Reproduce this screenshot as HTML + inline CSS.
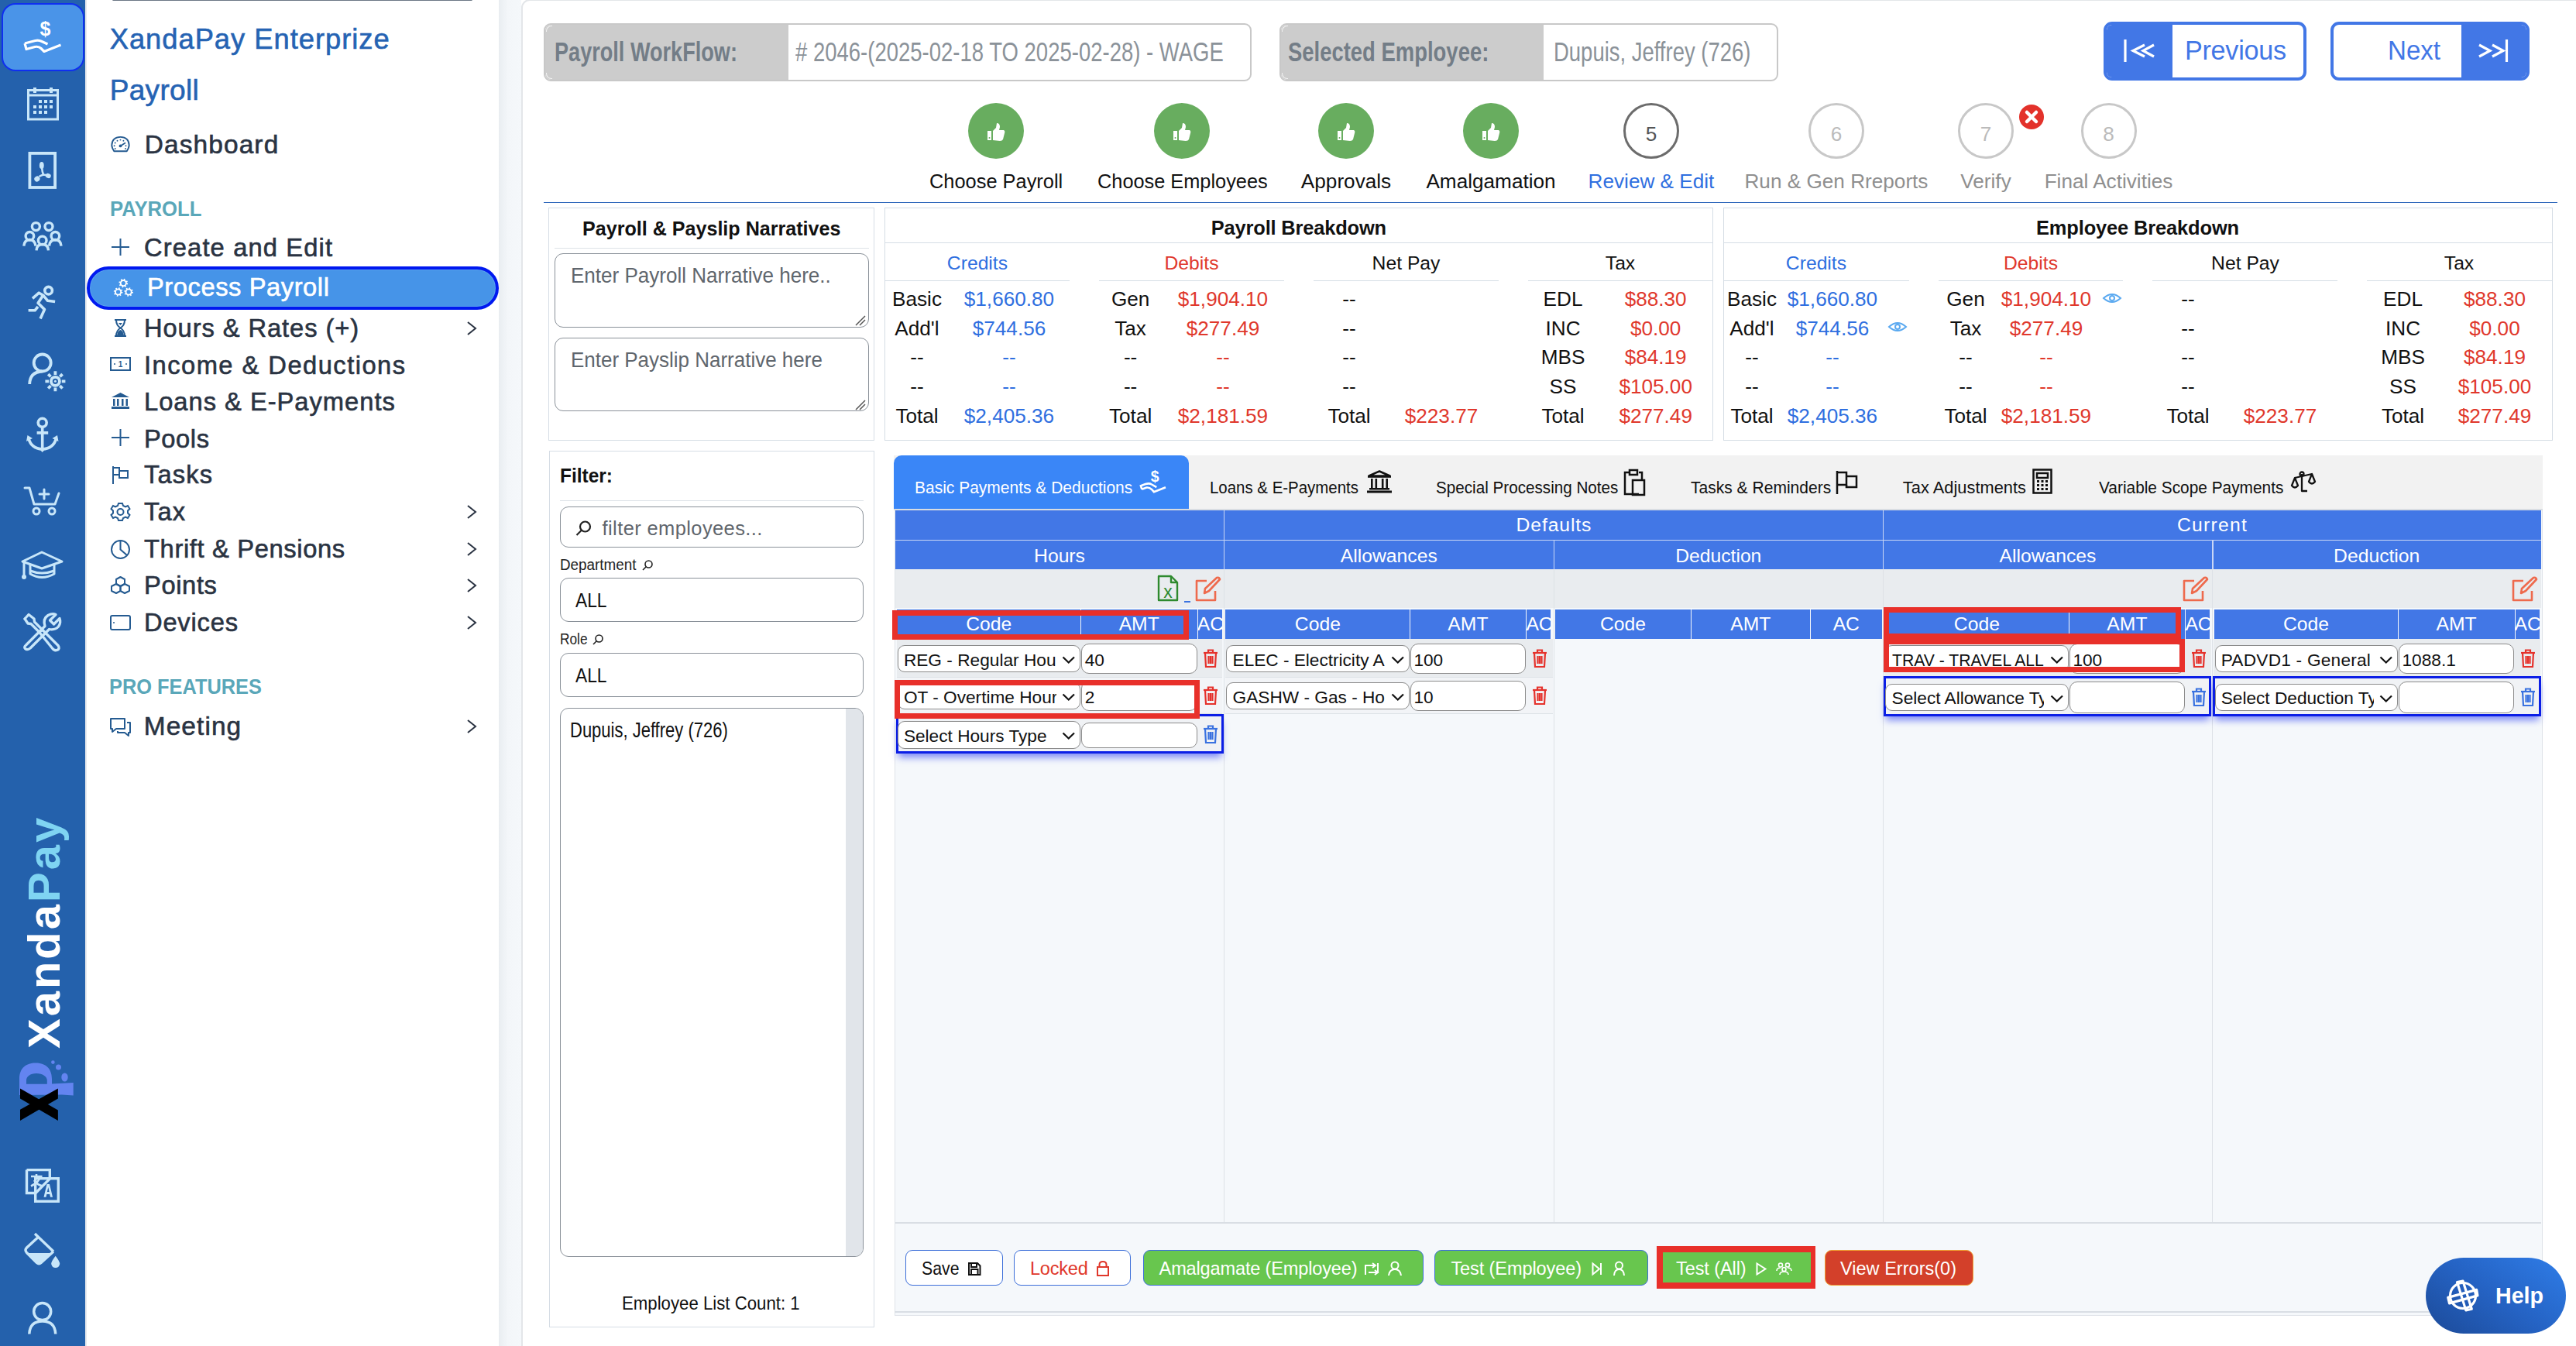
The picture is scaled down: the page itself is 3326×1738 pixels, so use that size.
<!DOCTYPE html>
<html><head><meta charset="utf-8"><title>XandaPay</title>
<style>
html,body{margin:0;padding:0;}
body{width:3326px;height:1738px;overflow:hidden;position:relative;background:#fff;font-family:"Liberation Sans",sans-serif;}
.r{position:absolute;box-sizing:border-box;}
.t{position:absolute;white-space:nowrap;line-height:normal;font-family:"Liberation Sans",sans-serif;}
svg.r{overflow:visible;}
.pm{-webkit-text-stroke:0.6px currentColor;}
</style></head><body>
<div class="r" style="left:0.00px;top:0.00px;width:110.00px;height:1738.00px;background:#2461ac;"></div>
<div class="r" style="left:110.00px;top:0.00px;width:2.00px;height:1738.00px;background:#e6e9ed;"></div>
<div class="r" style="left:1.50px;top:3.50px;width:107.00px;height:88.50px;background:#4a94e8;border:2px solid #0f2ff0;border-radius:18px;"></div>
<svg class="r" style="left:25.00px;top:20.00px;" width="60.00" height="55.00" viewBox="25 20 60 55" preserveAspectRatio="none">
<text x="58.4" y="45.5" font-family="Liberation Sans" font-weight="700" font-size="25" fill="#fff" text-anchor="middle">$</text>
<path d="M32 56 L45.5 52.5 Q50 51.5 54 53.5 L61.5 57" fill="none" stroke="#fff" stroke-width="3.2" stroke-linejoin="round"/>
<path d="M32 56 L34 63.5 L45 60.5 Q50 59.5 53 62.5 L57 66.5 L78.5 58" fill="none" stroke="#fff" stroke-width="3.2" stroke-linejoin="round"/>
</svg>
<svg class="r" style="left:34.50px;top:113.00px;" width="41.00" height="42.50" viewBox="0 0 41.0 42.5" preserveAspectRatio="none">
<rect x="1.5" y="3.5" width="38" height="37.5" fill="none" stroke="#c8e6f9" stroke-width="3"/>
<line x1="1.5" y1="10" x2="39.5" y2="10" stroke="#c8e6f9" stroke-width="3"/>
<rect x="8" y="0" width="4" height="7" fill="#c8e6f9"/><rect x="29" y="0" width="4" height="7" fill="#c8e6f9"/>
<g fill="#c8e6f9"><rect x="15" y="16" width="4" height="4"/><rect x="22" y="16" width="4" height="4"/><rect x="29" y="16" width="4" height="4"/>
<rect x="8" y="23" width="4" height="4"/><rect x="15" y="23" width="4" height="4"/><rect x="22" y="23" width="4" height="4"/><rect x="29" y="23" width="4" height="4"/>
<rect x="8" y="30" width="4" height="4"/><rect x="15" y="30" width="4" height="4"/><rect x="22" y="30" width="4" height="4"/></g>
</svg>
<svg class="r" style="left:34.00px;top:194.00px;" width="42.00" height="52.00" viewBox="34 194 42 52" preserveAspectRatio="none">
<rect x="38.4" y="197.9" width="32.7" height="44.1" fill="none" stroke="#c8e6f9" stroke-width="3.8"/>
<g fill="#c8e6f9"><ellipse cx="53.8" cy="213.5" rx="2.9" ry="4.6"/><ellipse cx="47.9" cy="231" rx="3.7" ry="3.3" transform="rotate(-35 47.9 231)"/><ellipse cx="62.3" cy="227" rx="3.5" ry="3" transform="rotate(20 62.3 227)"/></g>
<path d="M54 216 Q54.5 222 56 225.5 Q53 226.5 50.5 228 M56 225.5 Q59 226 61 226.5" fill="none" stroke="#c8e6f9" stroke-width="2.6"/>
</svg>
<svg class="r" style="left:28.00px;top:284.00px;" width="54.00" height="41.00" viewBox="0 0 54 41" preserveAspectRatio="none">
<g fill="none" stroke="#c8e6f9" stroke-width="3.4">
<circle cx="18.4" cy="8.6" r="5"/><circle cx="35" cy="8.6" r="5"/>
<circle cx="10.4" cy="20.8" r="5.3"/><circle cx="26.7" cy="26.4" r="5.3"/><circle cx="43.4" cy="20.8" r="5.3"/>
<path d="M2.8 33.6 Q3.5 25.5 10.4 25.5 Q17 25.5 18 33.6"/><path d="M19 39.3 Q19.5 31.5 26.7 31.5 Q34 31.5 34.5 39.3"/><path d="M35.5 33.6 Q36.3 25.5 43.4 25.5 Q50.3 25.5 51 33.6"/>
</g></svg>
<svg class="r" style="left:34.00px;top:368.00px;" width="42.00" height="46.00" viewBox="0 0 42 46" preserveAspectRatio="none">
<g fill="none" stroke="#c8e6f9" stroke-width="3.6" stroke-linecap="butt" stroke-linejoin="round">
<circle cx="28.6" cy="7.2" r="4.8"/>
<path d="M8 17.3 L16.3 10.2 L21.7 13.2 L27.6 20.3 L37.1 21.5"/>
<path d="M21.7 13.2 L15.1 23.3 L23.5 31.6 L18.1 43.5"/>
<path d="M15 28 L11 32.8 L2.6 32.8"/>
</g></svg>
<svg class="r" style="left:30.00px;top:450.00px;" width="60.00" height="60.00" viewBox="30 450 60 60" preserveAspectRatio="none">
<g fill="none" stroke="#c8e6f9" stroke-width="3.8">
<circle cx="54.7" cy="468.5" r="11"/><path d="M38.2 496 Q38.5 480.5 54.5 479.5"/>
<circle cx="71.4" cy="492.3" r="5.5"/>
</g>
<g stroke="#c8e6f9" stroke-width="3.8"><path d="M71.4 479.3 L71.4 484 M71.4 500.5 L71.4 505.3 M58.4 492.3 L63 492.3 M79.8 492.3 L84.4 492.3 M62.2 483.1 L65.5 486.4 M77.3 498.2 L80.6 501.5 M62.2 501.5 L65.5 498.2 M77.3 486.4 L80.6 483.1"/></g>
<circle cx="71.4" cy="492.3" r="1.5" fill="#c8e6f9"/>
</svg>
<svg class="r" style="left:30.00px;top:535.00px;" width="50.00" height="50.00" viewBox="30 535 50 50" preserveAspectRatio="none">
<g fill="none" stroke="#c8e6f9" stroke-width="3.6">
<circle cx="54.7" cy="545.8" r="5.5"/><path d="M54.7 551.3 L54.7 580 M47.6 558.9 L62.2 558.9"/>
<path d="M37 566 Q40 579 54.7 580 Q69.4 579 72.5 566"/>
</g>
<path d="M34 570 L35.5 562 L42 566 Z M75.5 570 L74 562 L67.5 566 Z" fill="#c8e6f9"/>
<path d="M51 580 L54.7 584 L58.4 580 Z" fill="#c8e6f9"/>
</svg>
<svg class="r" style="left:31.00px;top:628.00px;" width="46.00" height="38.00" viewBox="0 0 46 38" preserveAspectRatio="none">
<g fill="none" stroke="#c8e6f9" stroke-width="3" stroke-linecap="round" stroke-linejoin="round">
<path d="M1 2 L7 2 L13 23 L40 23 L45 9"/><path d="M26 4 L26 16 M20 10 L32 10"/>
<circle cx="16" cy="32" r="4"/><circle cx="36" cy="32" r="4"/>
</g></svg>
<svg class="r" style="left:26.00px;top:710.00px;" width="57.00" height="40.00" viewBox="0 0 57 40" preserveAspectRatio="none">
<g fill="none" stroke="#c8e6f9" stroke-width="3" stroke-linejoin="round">
<path d="M3 15 L28 3 L54 15 L28 24 Z"/>
<path d="M13 19 L13 31 Q28 40 44 31 L44 19"/><path d="M13 27 Q28 33 44 27"/>
<path d="M5 16 L5 34"/>
</g><circle cx="5" cy="35" r="3" fill="#c8e6f9"/></svg>
<svg class="r" style="left:25.00px;top:788.00px;" width="60.00" height="57.00" viewBox="25 788 60 57" preserveAspectRatio="none">
<g fill="none" stroke="#c8e6f9" stroke-width="3.3" stroke-linejoin="round" stroke-linecap="round">
<path d="M32 799 L37 793.5 L44 799 L44.5 803 L55 813.5"/>
<path d="M32 799 L36 805 L40 805.5 L50.5 816"/>
<path d="M55 813.5 L75 833.5 Q78 838 73.5 839.5 Q70 840.5 67.5 837 L50.5 816 Z"/>
<path d="M33.5 833 L58 808.5 Q55 799 62 794.5 Q67.5 791.5 72 793.5 L64.5 801 L69.5 806 L77 798.5 Q79 804 75.5 809 Q71 814 63.5 812.5 L39 837 Q35 840 32.5 837.5 Q30.5 835.5 33.5 833 Z"/>
</g></svg>
<div class="t" style="left:22.5px;top:1354px;transform-origin:0 0;transform:rotate(-90deg);font-size:58px;font-weight:700;color:#fff;letter-spacing:3px;">Xanda<span style="color:#7fd4f2;">Pay</span></div>
<svg class="r" style="left:20.00px;top:1365.00px;" width="80.00" height="85.00" viewBox="0 0 80 85" preserveAspectRatio="none">
<path fill-rule="evenodd" d="M5 49 L5 28 C5 14 14 7.5 26 7.5 C38 7.5 47 14 47 28 L47 34.5 L74.7 33 L74.7 49.4 L60 48.5 L5 49 Z M14 34.7 L14 30 C14 25 19 21 27 21 C35 21 40.8 25 40.8 30 L40.8 34.7 Z" fill="#6384f0"/>
<circle cx="48.4" cy="6.6" r="2.3" fill="#6384f0"/><circle cx="55.5" cy="13" r="3.5" fill="#6384f0"/><ellipse cx="63.5" cy="26" rx="4.2" ry="5.5" fill="#6384f0"/>
<polygon points="6,40.5 54.9,68.6 54.9,82 6,53.4" fill="#000"/><polygon points="6,67.7 54.9,40.5 54.9,53.4 6,82" fill="#000"/>
</svg>
<svg class="r" style="left:28.00px;top:1504.00px;" width="54.00" height="54.00" viewBox="28 1504 54 54" preserveAspectRatio="none">
<g fill="none" stroke="#c8e6f9" stroke-width="3.4">
<path d="M34.5 1510.6 L64.3 1510.6 L64.3 1522 M34.5 1510.6 L34.5 1540.5 L46 1540.5"/>
<rect x="45.7" y="1521.7" width="29.6" height="29.5"/>
</g>
<path d="M46 1540.5 L64.3 1522" stroke="#c8e6f9" stroke-width="3.4"/>
<path d="M40 1519 L54.5 1519 M47 1516 L47 1519 M52 1519 Q50 1527 40 1531.5 M44 1524 Q48 1530 54 1531" fill="none" stroke="#c8e6f9" stroke-width="2.6"/>
<path d="M56.5 1545.8 L60.5 1529 L64 1529 L68 1545.8 L65 1545.8 L64.2 1542 L60.3 1542 L59.5 1545.8 Z M60.9 1539 L63.6 1539 L62.3 1533 Z" fill="#c8e6f9" fill-rule="evenodd"/>
</svg>
<svg class="r" style="left:28.00px;top:1588.00px;" width="54.00" height="54.00" viewBox="28 1588 54 54" preserveAspectRatio="none">
<path d="M45 1593 L69 1616" stroke="#c8e6f9" stroke-width="3.4" fill="none"/>
<path d="M49.5 1597.3 L34.5 1611 Q31.5 1614.3 34.5 1617.5 L47.5 1630.5 Q50.3 1633 53 1630.5 L69 1616" fill="none" stroke="#c8e6f9" stroke-width="3.4" stroke-linejoin="round"/>
<path d="M35.5 1618 L66.5 1618 L52 1631 Q50.3 1632.5 48.5 1631 Z" fill="#c8e6f9"/>
<path d="M71.7 1621.8 Q65.5 1629.5 66.3 1632.5 Q67.5 1637 71.7 1637 Q76 1637 77.1 1632.5 Q77.8 1629.5 71.7 1621.8 Z" fill="#c8e6f9"/>
</svg>
<svg class="r" style="left:32.00px;top:1678.00px;" width="46.00" height="48.00" viewBox="32 1678 46 48" preserveAspectRatio="none">
<g fill="none" stroke="#c8e6f9" stroke-width="3.5"><circle cx="54.7" cy="1693.6" r="11"/><path d="M37.8 1722.5 Q38.5 1706 54.7 1706 Q71 1706 71.7 1722.5"/></g></svg>
<div class="r" style="left:145.00px;top:-2.00px;width:465.00px;height:3.00px;background:#6b7785;border-radius:2px;"></div>
<div class="t pm" style="left:141.70px;top:29.60px;font-size:36.34px;color:#2563b3;letter-spacing:0.979px;">XandaPay Enterprize</div>
<div class="t pm" style="left:141.70px;top:95.45px;font-size:37.06px;color:#2563b3;letter-spacing:0.295px;">Payroll</div>
<div class="t pm" style="left:186.70px;top:167.74px;font-size:33.43px;color:#2a3342;letter-spacing:1.128px;">Dashboard</div>
<svg class="r" style="left:140.00px;top:172.00px;" width="32.00" height="28.00" viewBox="140 172 32 28" preserveAspectRatio="none"><path d="M147.3 195.2 Q144.3 190.5 144.3 187.5 Q144.8 177 155.5 176.9 Q166.2 177 166.7 187.5 Q166.7 190.5 163.7 195.2 Z" fill="none" stroke="#255b91" stroke-width="1.9" stroke-linejoin="round"/><circle cx="155.5" cy="180.6" r="0.95" fill="#255b91"/><circle cx="151.5" cy="181.7" r="0.95" fill="#255b91"/><circle cx="159.4" cy="181.7" r="0.95" fill="#255b91"/><circle cx="148.7" cy="184.5" r="0.95" fill="#255b91"/><circle cx="147.6" cy="188.3" r="0.95" fill="#255b91"/><circle cx="148.7" cy="192" r="0.95" fill="#255b91"/><circle cx="162.5" cy="188.3" r="0.95" fill="#255b91"/><circle cx="162" cy="192" r="0.95" fill="#255b91"/><path d="M155.5 188.4 L161.4 184.8" stroke="#255b91" stroke-width="1.8" stroke-linecap="round"/><circle cx="155.5" cy="188.4" r="1.9" fill="#255b91"/></svg>
<div class="t " style="left:141.60px;top:254.00px;font-size:27.62px;color:#5aa7b9;font-weight:700;transform-origin:0 0;transform:scaleX(0.9300);">PAYROLL</div>
<div class="t pm" style="left:186.00px;top:301.09px;font-size:32.70px;color:#2a3342;letter-spacing:1.136px;">Create and Edit</div>
<svg class="r" style="left:144.00px;top:307.70px;" width="23.00" height="22.00" viewBox="0 0 23 22.0" preserveAspectRatio="none"><path d="M11.5 0 L11.5 22 M0 11 L23 11" stroke="#255b91" stroke-width="2"/></svg>
<div class="t pm" style="left:186.00px;top:405.09px;font-size:32.70px;color:#2a3342;letter-spacing:0.918px;">Hours &amp; Rates (+)</div>
<svg class="r" style="left:601.00px;top:413.70px;" width="16.00" height="20.00" viewBox="0 0 16 20.0" preserveAspectRatio="none"><path d="M3 2 L13 10 L3 18" fill="none" stroke="#2a3342" stroke-width="2"/></svg>
<svg class="r" style="left:147.00px;top:411.70px;" width="17.00" height="23.00" viewBox="0 0 17 23.0" preserveAspectRatio="none"><path d="M1 1 L16 1 M1 22 L16 22 M3 1 Q3 8 8.5 11.5 Q14 15 14 22 M14 1 Q14 8 8.5 11.5 Q3 15 3 22" fill="none" stroke="#255b91" stroke-width="2"/><path d="M4 21 Q5 15 8.5 14 Q12 15 13 21 Z M6 5 L11 5 L8.5 8Z" fill="#255b91"/></svg>
<div class="t pm" style="left:186.00px;top:452.59px;font-size:32.70px;color:#2a3342;letter-spacing:1.464px;">Income &amp; Deductions</div>
<svg class="r" style="left:142.00px;top:461.20px;" width="27.00" height="18.00" viewBox="0 0 27 18.0" preserveAspectRatio="none"><rect x="1" y="1" width="25" height="16" fill="none" stroke="#255b91" stroke-width="2"/><text x="13.5" y="13" font-size="10" font-family="Liberation Sans" font-weight="700" fill="#255b91" text-anchor="middle">1</text><circle cx="6" cy="9" r="1" fill="#255b91"/><circle cx="21" cy="9" r="1" fill="#255b91"/></svg>
<div class="t pm" style="left:186.00px;top:499.79px;font-size:32.70px;color:#2a3342;letter-spacing:0.985px;">Loans &amp; E-Payments</div>
<svg class="r" style="left:143.00px;top:506.40px;" width="25.00" height="22.00" viewBox="0 0 25 22.0" preserveAspectRatio="none"><path d="M12.5 1 L24 7 L1 7 Z" fill="#255b91"/><g fill="#255b91"><rect x="3" y="9" width="2.5" height="9"/><rect x="8" y="9" width="2.5" height="9"/><rect x="14" y="9" width="2.5" height="9"/><rect x="19.5" y="9" width="2.5" height="9"/><rect x="1" y="19" width="23" height="3"/></g></svg>
<div class="t pm" style="left:186.00px;top:547.69px;font-size:32.70px;color:#2a3342;letter-spacing:0.560px;">Pools</div>
<svg class="r" style="left:144.00px;top:554.30px;" width="23.00" height="22.00" viewBox="0 0 23 22.0" preserveAspectRatio="none"><path d="M11.5 0 L11.5 22 M0 11 L23 11" stroke="#255b91" stroke-width="2"/></svg>
<div class="t pm" style="left:186.00px;top:594.39px;font-size:32.70px;color:#2a3342;letter-spacing:1.111px;">Tasks</div>
<svg class="r" style="left:144.00px;top:601.00px;" width="23.00" height="24.00" viewBox="0 0 23 24" preserveAspectRatio="none"><path d="M2 1 L2 24 M2 3 L10 3 L10 7 L21 7 L21 16 L10 16 L10 12 L2 12 M10 3 L10 12" fill="none" stroke="#255b91" stroke-width="2"/></svg>
<div class="t pm" style="left:186.00px;top:642.39px;font-size:32.70px;color:#2a3342;letter-spacing:1.073px;">Tax</div>
<svg class="r" style="left:601.00px;top:651.00px;" width="16.00" height="20.00" viewBox="0 0 16 20" preserveAspectRatio="none"><path d="M3 2 L13 10 L3 18" fill="none" stroke="#2a3342" stroke-width="2"/></svg>
<svg class="r" style="left:143.00px;top:649.00px;" width="25.00" height="24.00" viewBox="0 0 25 24" preserveAspectRatio="none"><g fill="none" stroke="#255b91" stroke-width="2"><circle cx="12.5" cy="12" r="4"/><path d="M10 1 L15 1 L16 4 L19 5.5 L22 4 L24.5 8 L22 10.5 L22 13.5 L24.5 16 L22 20 L19 18.5 L16 20 L15 23 L10 23 L9 20 L6 18.5 L3 20 L0.5 16 L3 13.5 L3 10.5 L0.5 8 L3 4 L6 5.5 L9 4 Z"/></g></svg>
<div class="t pm" style="left:186.00px;top:689.99px;font-size:32.70px;color:#2a3342;letter-spacing:0.641px;">Thrift &amp; Pensions</div>
<svg class="r" style="left:601.00px;top:698.60px;" width="16.00" height="20.00" viewBox="0 0 16 20.0" preserveAspectRatio="none"><path d="M3 2 L13 10 L3 18" fill="none" stroke="#2a3342" stroke-width="2"/></svg>
<svg class="r" style="left:143.00px;top:696.60px;" width="25.00" height="25.00" viewBox="0 0 25 25.0" preserveAspectRatio="none"><g fill="none" stroke="#255b91" stroke-width="2"><circle cx="12.5" cy="12.5" r="11.5"/><path d="M12.5 1 L12.5 12.5 L21 20"/></g></svg>
<div class="t pm" style="left:186.00px;top:737.39px;font-size:32.70px;color:#2a3342;letter-spacing:0.617px;">Points</div>
<svg class="r" style="left:601.00px;top:746.00px;" width="16.00" height="20.00" viewBox="0 0 16 20" preserveAspectRatio="none"><path d="M3 2 L13 10 L3 18" fill="none" stroke="#2a3342" stroke-width="2"/></svg>
<svg class="r" style="left:143.00px;top:744.00px;" width="25.00" height="24.00" viewBox="0 0 25 24" preserveAspectRatio="none"><g fill="none" stroke="#255b91" stroke-width="2" stroke-linejoin="round"><path d="M12.5 1 L18 4 L18 10 L12.5 13 L7 10 L7 4 Z"/><path d="M7 10 L12.5 13 L12.5 19 L7 22 L1 19 L1 13 Z"/><path d="M18 10 L24 13 L24 19 L18 22 L12.5 19 L12.5 13Z"/></g></svg>
<div class="t pm" style="left:186.00px;top:785.39px;font-size:32.70px;color:#2a3342;letter-spacing:0.790px;">Devices</div>
<svg class="r" style="left:601.00px;top:794.00px;" width="16.00" height="20.00" viewBox="0 0 16 20" preserveAspectRatio="none"><path d="M3 2 L13 10 L3 18" fill="none" stroke="#2a3342" stroke-width="2"/></svg>
<svg class="r" style="left:142.00px;top:794.00px;" width="27.00" height="20.00" viewBox="0 0 27 20" preserveAspectRatio="none"><rect x="1" y="1" width="25" height="18" rx="2" fill="none" stroke="#255b91" stroke-width="2"/><circle cx="5" cy="10" r="1" fill="#255b91"/></svg>
<div class="r" style="left:112.00px;top:344.00px;width:532.00px;height:56.00px;background:#4694e8;border:4px solid #0019f0;border-radius:28px;box-shadow:inset 0 0 0 1px #5aa2ee;"></div>
<div class="t pm" style="left:190.00px;top:352.39px;font-size:32.70px;color:#fff;letter-spacing:0.562px;">Process Payroll</div>
<svg class="r" style="left:140.00px;top:355.00px;" width="35.00" height="35.00" viewBox="140 355 35 35" preserveAspectRatio="none"><circle cx="159.3" cy="365.6" r="3.6" fill="none" stroke="#fff" stroke-width="1.9"/><circle cx="159.3" cy="365.6" r="4.9" fill="none" stroke="#fff" stroke-width="1.9" stroke-dasharray="1.55 2.3"/><circle cx="152.6" cy="377" r="3.6" fill="none" stroke="#fff" stroke-width="1.9"/><circle cx="152.6" cy="377" r="4.9" fill="none" stroke="#fff" stroke-width="1.9" stroke-dasharray="1.55 2.3"/><circle cx="166.1" cy="377" r="3.6" fill="none" stroke="#fff" stroke-width="1.9"/><circle cx="166.1" cy="377" r="4.9" fill="none" stroke="#fff" stroke-width="1.9" stroke-dasharray="1.55 2.3"/></svg>
<div class="t " style="left:141.00px;top:870.60px;font-size:28.05px;color:#5aa7b9;font-weight:700;transform-origin:0 0;transform:scaleX(0.9050);">PRO FEATURES</div>
<div class="t pm" style="left:185.70px;top:918.54px;font-size:33.43px;color:#2a3342;letter-spacing:1.098px;">Meeting</div>
<svg class="r" style="left:601.00px;top:927.80px;" width="16.00" height="20.00" viewBox="0 0 16 20.0" preserveAspectRatio="none"><path d="M3 2 L13 10 L3 18" fill="none" stroke="#2a3342" stroke-width="2"/></svg>
<svg class="r" style="left:142.00px;top:926.00px;" width="28.00" height="26.00" viewBox="0 0 28 26" preserveAspectRatio="none"><g fill="none" stroke="#255b91" stroke-width="2" stroke-linejoin="round"><path d="M1 2 L19 2 L19 15 L8 15 L3 19 L3 15 L1 15 Z"/><path d="M22 7 L26 7 L26 20 L24 20 L24 24 L19 20 L10 20 L10 18"/></g></svg>
<div class="r" style="left:644.00px;top:0.00px;width:29.00px;height:1738.00px;background:linear-gradient(90deg,#e9edf1 0%,#f3f6f9 40%,#f5f8fb 100%);"></div>
<div class="r" style="left:672.50px;top:-0.70px;width:2667.50px;height:1760.70px;background:#fff;border:2px solid #e3e6e9;border-radius:11px;"></div>
<div class="r" style="left:702.00px;top:30.00px;width:914.00px;height:75.00px;background:#fff;border:2px solid #c8c8c8;border-radius:9px;overflow:hidden;"><div style="position:absolute;left:0;top:0;bottom:0;width:314px;background:#cccccc;"></div></div>
<div class="r" style="left:705px;top:33px;width:8px;height:8px;border-top:1.5px solid #f2f2f2;border-left:1.5px solid #f2f2f2;border-radius:7px 0 0 0;"></div>
<div class="r" style="left:705px;top:94px;width:8px;height:8px;border-bottom:1.5px solid #f2f2f2;border-left:1.5px solid #f2f2f2;border-radius:0 0 0 7px;"></div>
<div class="t " style="left:715.60px;top:47.42px;font-size:34.88px;color:#737d87;font-weight:700;transform-origin:0 0;transform:scaleX(0.7772);">Payroll WorkFlow:</div>
<div class="t " style="left:1027.00px;top:47.42px;font-size:34.88px;color:#8b9299;transform-origin:0 0;transform:scaleX(0.7885);"># 2046-(2025-02-18 TO 2025-02-28) - WAGE</div>
<div class="r" style="left:1651.50px;top:30.00px;width:644.50px;height:75.00px;background:#fff;border:2px solid #c8c8c8;border-radius:9px;overflow:hidden;"><div style="position:absolute;left:0;top:0;bottom:0;width:339.5px;background:#cccccc;"></div></div>
<div class="r" style="left:1654.5px;top:33px;width:8px;height:8px;border-top:1.5px solid #f2f2f2;border-left:1.5px solid #f2f2f2;border-radius:7px 0 0 0;"></div>
<div class="r" style="left:1654.5px;top:94px;width:8px;height:8px;border-bottom:1.5px solid #f2f2f2;border-left:1.5px solid #f2f2f2;border-radius:0 0 0 7px;"></div>
<div class="t " style="left:1662.60px;top:47.42px;font-size:34.88px;color:#737d87;font-weight:700;transform-origin:0 0;transform:scaleX(0.7869);">Selected Employee:</div>
<div class="t " style="left:2006.00px;top:47.42px;font-size:34.88px;color:#8b9299;transform-origin:0 0;transform:scaleX(0.7874);">Dupuis, Jeffrey (726)</div>
<div class="r" style="left:2716.00px;top:28.00px;width:262.00px;height:76.00px;background:#fff;border:4px solid #4277e6;border-radius:11px;overflow:hidden;"><div style="position:absolute;left:0;top:0;bottom:0;width:85px;background:#4277e6;"></div></div>
<div class="t " style="left:2821.00px;top:46.08px;font-size:34.16px;color:#4277e6;letter-spacing:-0.267px;">Previous</div>
<svg class="r" style="left:2740.00px;top:48.00px;" width="44.00" height="34.00" viewBox="0 0 44 34" preserveAspectRatio="none"><g fill="none" stroke="#fff" stroke-width="3.2"><path d="M4 3 L4 32"/><path d="M29 10 L14 17.5 L29 25"/><path d="M41 10 L27 17.5 L41 25"/></g></svg>
<div class="r" style="left:3009.00px;top:28.00px;width:257.00px;height:76.00px;background:#fff;border:4px solid #4277e6;border-radius:11px;overflow:hidden;"><div style="position:absolute;right:0;top:0;bottom:0;width:84px;background:#4277e6;"></div></div>
<div class="t " style="left:3083.00px;top:46.08px;font-size:34.16px;color:#4277e6;transform-origin:0 0;transform:scaleX(0.9688);">Next</div>
<svg class="r" style="left:3198.00px;top:48.00px;" width="44.00" height="34.00" viewBox="0 0 44 34" preserveAspectRatio="none"><g fill="none" stroke="#fff" stroke-width="3.2"><path d="M38.5 3 L38.5 32"/><path d="M3 10 L17 17.5 L3 25"/><path d="M20 10 L34 17.5 L20 25"/></g></svg>
<div class="r" style="left:1250px;top:133px;width:72px;height:72px;border-radius:50%;background:#68ad5f;"></div>
<svg class="r" style="left:1274.00px;top:158.00px;" width="24.00" height="24.00" viewBox="-12 -12 24 24" preserveAspectRatio="none"><path d="M-11 -1 L-6 -1 L-6 11 L-11 11 Z M-4 -1 L0 -5 L1 -11 Q5 -11 5 -6 L4 -2 L10 -2 Q12 -1 11 2 L9 10 Q8 12 5 12 L-4 11 Z" fill="#fff"/><circle cx="-8.5" cy="8" r="1" fill="#68ad5f"/></svg>
<div class="t " style="left:1199.60px;top:218.91px;font-size:26.16px;color:#111;transform-origin:0 0;transform:scaleX(0.9708);">Choose Payroll</div>
<div class="r" style="left:1490px;top:133px;width:72px;height:72px;border-radius:50%;background:#68ad5f;"></div>
<svg class="r" style="left:1514.00px;top:158.00px;" width="24.00" height="24.00" viewBox="-12 -12 24 24" preserveAspectRatio="none"><path d="M-11 -1 L-6 -1 L-6 11 L-11 11 Z M-4 -1 L0 -5 L1 -11 Q5 -11 5 -6 L4 -2 L10 -2 Q12 -1 11 2 L9 10 Q8 12 5 12 L-4 11 Z" fill="#fff"/><circle cx="-8.5" cy="8" r="1" fill="#68ad5f"/></svg>
<div class="t " style="left:1416.70px;top:218.91px;font-size:26.16px;color:#111;transform-origin:0 0;transform:scaleX(0.9686);">Choose Employees</div>
<div class="r" style="left:1702px;top:133px;width:72px;height:72px;border-radius:50%;background:#68ad5f;"></div>
<svg class="r" style="left:1726.00px;top:158.00px;" width="24.00" height="24.00" viewBox="-12 -12 24 24" preserveAspectRatio="none"><path d="M-11 -1 L-6 -1 L-6 11 L-11 11 Z M-4 -1 L0 -5 L1 -11 Q5 -11 5 -6 L4 -2 L10 -2 Q12 -1 11 2 L9 10 Q8 12 5 12 L-4 11 Z" fill="#fff"/><circle cx="-8.5" cy="8" r="1" fill="#68ad5f"/></svg>
<div class="t " style="left:1679.85px;top:218.91px;font-size:26.16px;color:#111;">Approvals</div>
<div class="r" style="left:1889px;top:133px;width:72px;height:72px;border-radius:50%;background:#68ad5f;"></div>
<svg class="r" style="left:1913.00px;top:158.00px;" width="24.00" height="24.00" viewBox="-12 -12 24 24" preserveAspectRatio="none"><path d="M-11 -1 L-6 -1 L-6 11 L-11 11 Z M-4 -1 L0 -5 L1 -11 Q5 -11 5 -6 L4 -2 L10 -2 Q12 -1 11 2 L9 10 Q8 12 5 12 L-4 11 Z" fill="#fff"/><circle cx="-8.5" cy="8" r="1" fill="#68ad5f"/></svg>
<div class="t " style="left:1841.41px;top:218.91px;font-size:26.16px;color:#111;">Amalgamation</div>
<div class="r" style="left:2096px;top:133px;width:72px;height:72px;border-radius:50%;border:3px solid #6c6c6c;"></div>
<div class="t " style="left:2124.74px;top:158.31px;font-size:26.16px;color:#555;">5</div>
<div class="t " style="left:2050.57px;top:218.91px;font-size:26.16px;color:#2f6fe0;">Review &amp; Edit</div>
<div class="r" style="left:2335px;top:133px;width:72px;height:72px;border-radius:50%;border:3px solid #c8c8c8;"></div>
<div class="t " style="left:2363.74px;top:158.31px;font-size:26.16px;color:#bbb;">6</div>
<div class="t " style="left:2252.48px;top:218.91px;font-size:26.16px;color:#8f8f8f;">Run &amp; Gen Rreports</div>
<div class="r" style="left:2528px;top:133px;width:72px;height:72px;border-radius:50%;border:3px solid #c8c8c8;"></div>
<div class="t " style="left:2556.74px;top:158.31px;font-size:26.16px;color:#bbb;">7</div>
<div class="t " style="left:2531.30px;top:218.91px;font-size:26.16px;color:#8f8f8f;">Verify</div>
<div class="r" style="left:2686.5px;top:133px;width:72px;height:72px;border-radius:50%;border:3px solid #c8c8c8;"></div>
<div class="t " style="left:2715.24px;top:158.31px;font-size:26.16px;color:#bbb;">8</div>
<div class="t " style="left:2639.63px;top:218.91px;font-size:26.16px;color:#8f8f8f;">Final Activities</div>
<svg class="r" style="left:2607.00px;top:135.00px;" width="32.00" height="32.00" viewBox="0 0 32 32" preserveAspectRatio="none"><circle cx="16" cy="16" r="16" fill="#e3322b"/><path d="M10 10 L22 22 M22 10 L10 22" stroke="#fff" stroke-width="4.5" stroke-linecap="round"/></svg>
<div class="r" style="left:702.00px;top:260.90px;width:2600.00px;height:1.40px;background:#2d66ba;"></div>
<div class="r" style="left:708.00px;top:268.00px;width:421.00px;height:301.00px;border:1.5px solid #d5dde5;"></div>
<div class="t " style="left:752.00px;top:280.31px;font-size:26.16px;color:#111;font-weight:700;transform-origin:0 0;transform:scaleX(0.9595);">Payroll &amp; Payslip Narratives</div>
<div class="r" style="left:716.00px;top:319.50px;width:406.00px;height:1.50px;background:#dde2e7;"></div>
<div class="r" style="left:716.00px;top:327.00px;width:406.00px;height:96.00px;border:1.5px solid #8a9199;border-radius:11px;background:#fff;"></div>
<div class="t " style="left:737.00px;top:340.96px;font-size:26.89px;color:#5f666d;transform-origin:0 0;transform:scaleX(0.9690);">Enter Payroll Narrative here..</div>
<svg class="r" style="left:1104.00px;top:407.00px;" width="14.00" height="13.00" viewBox="0 0 14 13" preserveAspectRatio="none"><path d="M1 13 L13 1 M6 13 L13 6" stroke="#555" stroke-width="1.5"/></svg>
<div class="r" style="left:716.00px;top:436.40px;width:406.00px;height:95.10px;border:1.5px solid #8a9199;border-radius:11px;background:#fff;"></div>
<div class="t " style="left:737.00px;top:450.06px;font-size:26.89px;color:#5f666d;transform-origin:0 0;transform:scaleX(0.9665);">Enter Payslip Narrative here</div>
<svg class="r" style="left:1104.00px;top:515.50px;" width="14.00" height="13.00" viewBox="0 0 14 13.0" preserveAspectRatio="none"><path d="M1 13 L13 1 M6 13 L13 6" stroke="#555" stroke-width="1.5"/></svg>
<div class="r" style="left:1142.00px;top:268.00px;width:1070.00px;height:301.00px;border:1.5px solid #d5dde5;"></div>
<div class="t " style="left:1563.80px;top:280.37px;font-size:25.44px;color:#111;font-weight:700;letter-spacing:-0.166px;">Payroll Breakdown</div>
<div class="r" style="left:1142.00px;top:312.50px;width:1070.00px;height:1.50px;background:#d5dde5;"></div>
<div class="r" style="left:2225.00px;top:268.00px;width:1071.00px;height:301.00px;border:1.5px solid #d5dde5;"></div>
<div class="t " style="left:2629.00px;top:280.37px;font-size:25.44px;color:#111;font-weight:700;letter-spacing:-0.134px;">Employee Breakdown</div>
<div class="r" style="left:2225.00px;top:312.50px;width:1071.00px;height:1.50px;background:#d5dde5;"></div>
<div class="t " style="left:1222.84px;top:325.63px;font-size:24.71px;color:#2f6fe0;">Credits</div>
<div class="r" style="left:1142.00px;top:361.50px;width:239.00px;height:1.50px;background:#d5dde5;"></div>
<div class="t " style="left:1503.47px;top:325.63px;font-size:24.71px;color:#e0382c;">Debits</div>
<div class="r" style="left:1419.00px;top:361.50px;width:239.00px;height:1.50px;background:#d5dde5;"></div>
<div class="t " style="left:1771.58px;top:325.63px;font-size:24.71px;color:#111;">Net Pay</div>
<div class="r" style="left:1696.00px;top:361.50px;width:239.00px;height:1.50px;background:#d5dde5;"></div>
<div class="t " style="left:2072.79px;top:325.63px;font-size:24.71px;color:#111;">Tax</div>
<div class="r" style="left:1973.00px;top:361.50px;width:238.00px;height:1.50px;background:#d5dde5;"></div>
<div class="t " style="left:2305.84px;top:325.63px;font-size:24.71px;color:#2f6fe0;">Credits</div>
<div class="r" style="left:2225.00px;top:361.50px;width:240.00px;height:1.50px;background:#d5dde5;"></div>
<div class="t " style="left:2586.97px;top:325.63px;font-size:24.71px;color:#e0382c;">Debits</div>
<div class="r" style="left:2503.00px;top:361.50px;width:238.00px;height:1.50px;background:#d5dde5;"></div>
<div class="t " style="left:2855.08px;top:325.63px;font-size:24.71px;color:#111;">Net Pay</div>
<div class="r" style="left:2779.00px;top:361.50px;width:239.00px;height:1.50px;background:#d5dde5;"></div>
<div class="t " style="left:3155.79px;top:325.63px;font-size:24.71px;color:#111;">Tax</div>
<div class="r" style="left:3056.00px;top:361.50px;width:239.00px;height:1.50px;background:#d5dde5;"></div>
<div class="t " style="left:1152.02px;top:371.31px;font-size:26.16px;color:#111;">Basic</div>
<div class="t " style="left:1244.79px;top:371.31px;font-size:26.16px;color:#2f6fe0;">$1,660.80</div>
<div class="t " style="left:1155.29px;top:408.81px;font-size:26.16px;color:#111;">Add'l</div>
<div class="t " style="left:1255.71px;top:408.81px;font-size:26.16px;color:#2f6fe0;">$744.56</div>
<div class="t " style="left:1175.30px;top:446.31px;font-size:26.16px;color:#111;">--</div>
<div class="t " style="left:1294.30px;top:446.31px;font-size:26.16px;color:#2f6fe0;">--</div>
<div class="t " style="left:1175.30px;top:484.31px;font-size:26.16px;color:#111;">--</div>
<div class="t " style="left:1294.30px;top:484.31px;font-size:26.16px;color:#2f6fe0;">--</div>
<div class="t " style="left:1156.40px;top:522.31px;font-size:26.16px;color:#111;">Total</div>
<div class="t " style="left:1244.79px;top:522.31px;font-size:26.16px;color:#2f6fe0;">$2,405.36</div>
<div class="t " style="left:1434.88px;top:371.31px;font-size:26.16px;color:#111;">Gen</div>
<div class="t " style="left:1520.79px;top:371.31px;font-size:26.16px;color:#e0382c;">$1,904.10</div>
<div class="t " style="left:1439.26px;top:408.81px;font-size:26.16px;color:#111;">Tax</div>
<div class="t " style="left:1531.71px;top:408.81px;font-size:26.16px;color:#e0382c;">$277.49</div>
<div class="t " style="left:1450.90px;top:446.31px;font-size:26.16px;color:#111;">--</div>
<div class="t " style="left:1570.30px;top:446.31px;font-size:26.16px;color:#e0382c;">--</div>
<div class="t " style="left:1450.90px;top:484.31px;font-size:26.16px;color:#111;">--</div>
<div class="t " style="left:1570.30px;top:484.31px;font-size:26.16px;color:#e0382c;">--</div>
<div class="t " style="left:1432.00px;top:522.31px;font-size:26.16px;color:#111;">Total</div>
<div class="t " style="left:1520.79px;top:522.31px;font-size:26.16px;color:#e0382c;">$2,181.59</div>
<div class="t " style="left:1733.30px;top:371.31px;font-size:26.16px;color:#111;">--</div>
<div class="t " style="left:1733.30px;top:408.81px;font-size:26.16px;color:#111;">--</div>
<div class="t " style="left:1733.30px;top:446.31px;font-size:26.16px;color:#111;">--</div>
<div class="t " style="left:1733.30px;top:484.31px;font-size:26.16px;color:#111;">--</div>
<div class="t " style="left:1714.40px;top:522.31px;font-size:26.16px;color:#111;">Total</div>
<div class="t " style="left:1813.71px;top:522.31px;font-size:26.16px;color:#e0382c;">$223.77</div>
<div class="t " style="left:1992.56px;top:371.31px;font-size:26.16px;color:#111;">EDL</div>
<div class="t " style="left:2097.67px;top:371.31px;font-size:26.16px;color:#e0382c;">$88.30</div>
<div class="t " style="left:1995.50px;top:408.81px;font-size:26.16px;color:#111;">INC</div>
<div class="t " style="left:2104.93px;top:408.81px;font-size:26.16px;color:#e0382c;">$0.00</div>
<div class="t " style="left:1989.68px;top:446.31px;font-size:26.16px;color:#111;">MBS</div>
<div class="t " style="left:2097.67px;top:446.31px;font-size:26.16px;color:#e0382c;">$84.19</div>
<div class="t " style="left:2000.54px;top:484.31px;font-size:26.16px;color:#111;">SS</div>
<div class="t " style="left:2090.41px;top:484.31px;font-size:26.16px;color:#e0382c;">$105.00</div>
<div class="t " style="left:1990.40px;top:522.31px;font-size:26.16px;color:#111;">Total</div>
<div class="t " style="left:2090.41px;top:522.31px;font-size:26.16px;color:#e0382c;">$277.49</div>
<div class="t " style="left:2230.02px;top:371.31px;font-size:26.16px;color:#111;">Basic</div>
<div class="t " style="left:2307.79px;top:371.31px;font-size:26.16px;color:#2f6fe0;">$1,660.80</div>
<div class="t " style="left:2233.29px;top:408.81px;font-size:26.16px;color:#111;">Add'l</div>
<div class="t " style="left:2318.71px;top:408.81px;font-size:26.16px;color:#2f6fe0;">$744.56</div>
<div class="t " style="left:2253.30px;top:446.31px;font-size:26.16px;color:#111;">--</div>
<div class="t " style="left:2357.30px;top:446.31px;font-size:26.16px;color:#2f6fe0;">--</div>
<div class="t " style="left:2253.30px;top:484.31px;font-size:26.16px;color:#111;">--</div>
<div class="t " style="left:2357.30px;top:484.31px;font-size:26.16px;color:#2f6fe0;">--</div>
<div class="t " style="left:2234.40px;top:522.31px;font-size:26.16px;color:#111;">Total</div>
<div class="t " style="left:2307.79px;top:522.31px;font-size:26.16px;color:#2f6fe0;">$2,405.36</div>
<div class="t " style="left:2513.28px;top:371.31px;font-size:26.16px;color:#111;">Gen</div>
<div class="t " style="left:2583.79px;top:371.31px;font-size:26.16px;color:#e0382c;">$1,904.10</div>
<div class="t " style="left:2517.66px;top:408.81px;font-size:26.16px;color:#111;">Tax</div>
<div class="t " style="left:2594.71px;top:408.81px;font-size:26.16px;color:#e0382c;">$277.49</div>
<div class="t " style="left:2529.30px;top:446.31px;font-size:26.16px;color:#111;">--</div>
<div class="t " style="left:2633.30px;top:446.31px;font-size:26.16px;color:#e0382c;">--</div>
<div class="t " style="left:2529.30px;top:484.31px;font-size:26.16px;color:#111;">--</div>
<div class="t " style="left:2633.30px;top:484.31px;font-size:26.16px;color:#e0382c;">--</div>
<div class="t " style="left:2510.40px;top:522.31px;font-size:26.16px;color:#111;">Total</div>
<div class="t " style="left:2583.79px;top:522.31px;font-size:26.16px;color:#e0382c;">$2,181.59</div>
<div class="t " style="left:2816.30px;top:371.31px;font-size:26.16px;color:#111;">--</div>
<div class="t " style="left:2816.30px;top:408.81px;font-size:26.16px;color:#111;">--</div>
<div class="t " style="left:2816.30px;top:446.31px;font-size:26.16px;color:#111;">--</div>
<div class="t " style="left:2816.30px;top:484.31px;font-size:26.16px;color:#111;">--</div>
<div class="t " style="left:2797.40px;top:522.31px;font-size:26.16px;color:#111;">Total</div>
<div class="t " style="left:2896.71px;top:522.31px;font-size:26.16px;color:#e0382c;">$223.77</div>
<div class="t " style="left:3077.06px;top:371.31px;font-size:26.16px;color:#111;">EDL</div>
<div class="t " style="left:3180.97px;top:371.31px;font-size:26.16px;color:#e0382c;">$88.30</div>
<div class="t " style="left:3080.00px;top:408.81px;font-size:26.16px;color:#111;">INC</div>
<div class="t " style="left:3188.23px;top:408.81px;font-size:26.16px;color:#e0382c;">$0.00</div>
<div class="t " style="left:3074.18px;top:446.31px;font-size:26.16px;color:#111;">MBS</div>
<div class="t " style="left:3180.97px;top:446.31px;font-size:26.16px;color:#e0382c;">$84.19</div>
<div class="t " style="left:3085.04px;top:484.31px;font-size:26.16px;color:#111;">SS</div>
<div class="t " style="left:3173.71px;top:484.31px;font-size:26.16px;color:#e0382c;">$105.00</div>
<div class="t " style="left:3074.90px;top:522.31px;font-size:26.16px;color:#111;">Total</div>
<div class="t " style="left:3173.71px;top:522.31px;font-size:26.16px;color:#e0382c;">$277.49</div>
<svg class="r" style="left:2438.00px;top:415.00px;" width="24.00" height="14.00" viewBox="0 0 24 14" preserveAspectRatio="none"><g fill="none" stroke="#5aa9f0" stroke-width="2"><path d="M1 7 Q12 -3 23 7 Q12 17 1 7 Z"/><circle cx="12" cy="7" r="3"/></g></svg>
<svg class="r" style="left:2714.50px;top:378.00px;" width="24.00" height="14.00" viewBox="0 0 24.0 14" preserveAspectRatio="none"><g fill="none" stroke="#5aa9f0" stroke-width="2"><path d="M1 7 Q12 -3 23 7 Q12 17 1 7 Z"/><circle cx="12" cy="7" r="3"/></g></svg>
<div class="r" style="left:708.50px;top:582.00px;width:420.50px;height:1131.50px;border:1.5px solid #d5dde5;"></div>
<div class="t " style="left:723.00px;top:599.01px;font-size:26.16px;color:#111;font-weight:700;transform-origin:0 0;transform:scaleX(0.9349);">Filter:</div>
<div class="r" style="left:723.00px;top:645.50px;width:392.00px;height:1.50px;background:#dde2e7;"></div>
<div class="r" style="left:723.00px;top:653.70px;width:392.00px;height:53.70px;border:1.5px solid #8a9199;border-radius:11px;background:#fff;"></div>
<svg class="r" style="left:743.00px;top:671.50px;" width="21.00" height="20.00" viewBox="0 0 21 20.0" preserveAspectRatio="none"><g fill="none" stroke="#222" stroke-width="2.2"><circle cx="12.5" cy="8" r="6.5"/><path d="M8 12.5 L1.5 19"/></g></svg>
<div class="t " style="left:777.60px;top:667.71px;font-size:25.50px;color:#5f666d;letter-spacing:0.384px;">filter employees...</div>
<div class="t " style="left:723.00px;top:718.50px;font-size:19.33px;color:#222;transform-origin:0 0;transform:scaleX(0.9742);">Department</div>
<svg class="r" style="left:829.00px;top:723.00px;" width="14.00" height="14.00" viewBox="0 0 14 14" preserveAspectRatio="none"><g fill="none" stroke="#222" stroke-width="1.6"><circle cx="8.5" cy="5.5" r="4.5"/><path d="M5.5 8.5 L1 13"/></g></svg>
<div class="r" style="left:723.00px;top:746.40px;width:392.00px;height:56.80px;border:1.5px solid #8a9199;border-radius:11px;background:#fff;"></div>
<div class="t " style="left:742.50px;top:760.05px;font-size:26.45px;color:#111;transform-origin:0 0;transform:scaleX(0.8601);">ALL</div>
<div class="t " style="left:723.00px;top:814.50px;font-size:19.33px;color:#222;transform-origin:0 0;transform:scaleX(0.8936);">Role</div>
<svg class="r" style="left:765.00px;top:819.00px;" width="14.00" height="14.00" viewBox="0 0 14 14" preserveAspectRatio="none"><g fill="none" stroke="#222" stroke-width="1.6"><circle cx="8.5" cy="5.5" r="4.5"/><path d="M5.5 8.5 L1 13"/></g></svg>
<div class="r" style="left:723.00px;top:842.50px;width:392.00px;height:57.50px;border:1.5px solid #8a9199;border-radius:11px;background:#fff;"></div>
<div class="t " style="left:742.50px;top:856.55px;font-size:26.45px;color:#111;transform-origin:0 0;transform:scaleX(0.8601);">ALL</div>
<div class="r" style="left:722.50px;top:913.50px;width:392.50px;height:709.50px;border:1.5px solid #8a9199;border-radius:11px;background:#fff;overflow:hidden;"><div style="position:absolute;right:0;top:0;bottom:0;width:22px;background:#e1e5ea;"></div></div>
<div class="t " style="left:735.80px;top:926.80px;font-size:27.62px;color:#111;transform-origin:0 0;transform:scaleX(0.7965);">Dupuis, Jeffrey (726)</div>
<div class="t " style="left:802.70px;top:1668.99px;font-size:23.98px;color:#111;transform-origin:0 0;transform:scaleX(0.9267);">Employee List Count: 1</div>
<div class="r" style="left:1154.00px;top:588.00px;width:2129.00px;height:69.00px;background:#f2f2f2;"></div>
<div class="r" style="left:1154.00px;top:588.00px;width:381.00px;height:69.00px;background:#3a86f7;border-radius:10px 10px 0 0;"></div>
<div class="t " style="left:1180.70px;top:617.06px;font-size:21.80px;color:#fff;transform-origin:0 0;transform:scaleX(0.9632);">Basic Payments &amp; Deductions</div>
<svg class="r" style="left:1468.00px;top:604.00px;" width="40.00" height="36.00" viewBox="1468 604 40 36" preserveAspectRatio="none"><text x="1491.2" y="621.5" font-family="Liberation Sans" font-weight="700" font-size="19.5" fill="#fff" text-anchor="middle">$</text><path d="M1474.3 631.7 L1472.9 627.3 L1479 625 Q1484 623.5 1487 625.5 L1493.3 629.2 M1474.3 631.7 L1480.5 629.5 Q1484 629 1487 632 L1489.9 635.2 L1505 629.2" fill="none" stroke="#fff" stroke-width="2.6" stroke-linejoin="miter"/></svg>
<div class="t " style="left:1562.00px;top:617.06px;font-size:21.80px;color:#111;transform-origin:0 0;transform:scaleX(0.9373);">Loans &amp; E-Payments</div>
<svg class="r" style="left:1765.00px;top:606.00px;" width="32.00" height="31.00" viewBox="0 0 32 31" preserveAspectRatio="none"><path d="M16 2.5 L29.5 8.5 L2.5 8.5 Z" fill="none" stroke="#111" stroke-width="2.6" stroke-linejoin="round"/><g fill="#111"><rect x="1" y="8" width="30" height="2.8"/><rect x="5" y="12" width="2.6" height="12"/><rect x="10.5" y="12" width="2.6" height="12"/><rect x="18.9" y="12" width="2.6" height="12"/><rect x="24.4" y="12" width="2.6" height="12"/><rect x="3" y="24" width="26" height="2.5"/><rect x="0" y="27.5" width="32" height="3"/></g></svg>
<div class="t " style="left:1853.50px;top:617.06px;font-size:21.80px;color:#111;transform-origin:0 0;transform:scaleX(0.9479);">Special Processing Notes</div>
<svg class="r" style="left:2096.00px;top:605.00px;" width="29.00" height="35.00" viewBox="0 0 29 35" preserveAspectRatio="none"><g fill="none" stroke="#111" stroke-width="2.5"><path d="M7 5 L2 5 L2 33 L20 33"/><path d="M20 5 L24 5 L24 14"/><rect x="8" y="2" width="10" height="6"/><rect x="12" y="15" width="15" height="19"/></g></svg>
<div class="t " style="left:2182.70px;top:617.06px;font-size:21.80px;color:#111;transform-origin:0 0;transform:scaleX(0.9652);">Tasks &amp; Reminders</div>
<svg class="r" style="left:2370.00px;top:607.00px;" width="29.00" height="31.00" viewBox="0 0 29 31" preserveAspectRatio="none"><g fill="none" stroke="#111" stroke-width="2.5"><path d="M2 1 L2 31"/><path d="M2 3 L14 3 L14 19 L2 19"/><path d="M14 8 L27 8 L27 22 L14 22 L14 19"/></g></svg>
<div class="t " style="left:2456.80px;top:617.06px;font-size:21.80px;color:#111;letter-spacing:0.034px;">Tax Adjustments</div>
<svg class="r" style="left:2624.00px;top:605.00px;" width="26.00" height="33.00" viewBox="0 0 26 33" preserveAspectRatio="none"><g fill="none" stroke="#111" stroke-width="2.5"><rect x="1.5" y="1.5" width="23" height="30"/><rect x="6" y="6" width="14" height="6"/></g><g fill="#111"><rect x="6" y="15" width="3" height="3"/><rect x="11.5" y="15" width="3" height="3"/><rect x="17" y="15" width="3" height="3"/><rect x="6" y="20" width="3" height="3"/><rect x="11.5" y="20" width="3" height="3"/><rect x="17" y="20" width="3" height="3"/><rect x="6" y="25" width="3" height="3"/><rect x="11.5" y="25" width="3" height="3"/><rect x="17" y="25" width="3" height="3"/></g></svg>
<div class="t " style="left:2709.50px;top:617.06px;font-size:21.80px;color:#111;transform-origin:0 0;transform:scaleX(0.9566);">Variable Scope Payments</div>
<svg class="r" style="left:2958.00px;top:608.00px;" width="34.00" height="28.00" viewBox="0 0 34 28" preserveAspectRatio="none"><g fill="none" stroke="#111" stroke-width="2.3" stroke-linejoin="round"><path d="M14 4 L14 26 L21 26"/><path d="M5 9 L27 4"/><path d="M5 9 L1 19 Q5 24 9 19 Z"/><path d="M27 4 L23 14 Q27 19 31 14 Z"/><circle cx="14" cy="4" r="2.5"/></g></svg>
<div class="r" style="left:1154.00px;top:657.00px;width:2129.00px;height:2.00px;background:#d9dde2;"></div>
<div class="r" style="left:1154.50px;top:659.00px;width:2128.00px;height:1040.00px;background:#f5f8fb;border:1.5px solid #dfe3e8;border-top:none;"></div>
<div class="r" style="left:1155.70px;top:659.00px;width:2125.30px;height:38.00px;background:#4277e6;"></div>
<div class="r" style="left:1155.70px;top:697.00px;width:2125.30px;height:1.00px;background:#c9d6f5;"></div>
<div class="r" style="left:1155.70px;top:698.00px;width:2125.30px;height:36.50px;background:#4277e6;"></div>
<div class="r" style="left:1579.90px;top:659.00px;width:1.50px;height:38.00px;background:#c9d6f5;"></div>
<div class="r" style="left:2430.90px;top:659.00px;width:1.50px;height:38.00px;background:#c9d6f5;"></div>
<div class="r" style="left:1579.90px;top:698.00px;width:1.50px;height:36.50px;background:#c9d6f5;"></div>
<div class="r" style="left:2005.70px;top:698.00px;width:1.50px;height:36.50px;background:#c9d6f5;"></div>
<div class="r" style="left:2430.90px;top:698.00px;width:1.50px;height:36.50px;background:#c9d6f5;"></div>
<div class="r" style="left:2856.00px;top:698.00px;width:1.50px;height:36.50px;background:#c9d6f5;"></div>
<div class="t " style="left:1957.50px;top:664.43px;font-size:24.71px;color:#fff;letter-spacing:0.902px;">Defaults</div>
<div class="t " style="left:2811.00px;top:664.43px;font-size:24.71px;color:#fff;letter-spacing:1.266px;">Current</div>
<div class="t " style="left:1335.06px;top:703.63px;font-size:24.71px;color:#fff;">Hours</div>
<div class="t " style="left:1730.79px;top:703.63px;font-size:24.71px;color:#fff;">Allowances</div>
<div class="t " style="left:2163.14px;top:703.63px;font-size:24.71px;color:#fff;">Deduction</div>
<div class="t " style="left:2581.44px;top:703.63px;font-size:24.71px;color:#fff;">Allowances</div>
<div class="t " style="left:3013.09px;top:703.63px;font-size:24.71px;color:#fff;">Deduction</div>
<div class="r" style="left:1155.70px;top:734.50px;width:2125.30px;height:50.70px;background:#e9ecef;"></div>
<div class="r" style="left:1579.90px;top:734.50px;width:1.30px;height:844.00px;background:#dde1e6;"></div>
<div class="r" style="left:2005.70px;top:734.50px;width:1.30px;height:844.00px;background:#dde1e6;"></div>
<div class="r" style="left:2430.90px;top:734.50px;width:1.30px;height:844.00px;background:#dde1e6;"></div>
<div class="r" style="left:2856.00px;top:734.50px;width:1.30px;height:844.00px;background:#dde1e6;"></div>
<div class="r" style="left:1155.70px;top:1578.00px;width:2125.30px;height:1.50px;background:#d9dee4;"></div>
<div class="r" style="left:1154.50px;top:1693.00px;width:2128.00px;height:1.50px;background:#d9dee4;"></div>
<div class="r" style="left:1157.70px;top:787.00px;width:237.50px;height:37.70px;background:#4277e6;"></div>
<div class="r" style="left:1396.20px;top:787.00px;width:149.50px;height:37.70px;background:#4277e6;"></div>
<div class="r" style="left:1546.70px;top:787.00px;width:31.00px;height:37.70px;background:#4277e6;overflow:hidden;"><div class="t" style="left:-1px;top:5.2px;font-size:24.7px;color:#fff;">AC</div></div>
<div class="t " style="left:1247.17px;top:792.13px;font-size:24.71px;color:#fff;">Code</div>
<div class="t " style="left:1444.63px;top:792.13px;font-size:24.71px;color:#fff;">AMT</div>
<div class="r" style="left:1582.40px;top:787.00px;width:237.50px;height:37.70px;background:#4277e6;"></div>
<div class="r" style="left:1820.90px;top:787.00px;width:149.50px;height:37.70px;background:#4277e6;"></div>
<div class="r" style="left:1971.40px;top:787.00px;width:31.00px;height:37.70px;background:#4277e6;overflow:hidden;"><div class="t" style="left:-1px;top:5.2px;font-size:24.7px;color:#fff;">AC</div></div>
<div class="t " style="left:1671.87px;top:792.13px;font-size:24.71px;color:#fff;">Code</div>
<div class="t " style="left:1869.33px;top:792.13px;font-size:24.71px;color:#fff;">AMT</div>
<div class="r" style="left:2008.00px;top:787.00px;width:175.00px;height:37.70px;background:#4277e6;"></div>
<div class="r" style="left:2184.00px;top:787.00px;width:152.60px;height:37.70px;background:#4277e6;"></div>
<div class="r" style="left:2337.60px;top:787.00px;width:92.40px;height:37.70px;background:#4277e6;"></div>
<div class="t " style="left:2065.97px;top:792.13px;font-size:24.71px;color:#fff;">Code</div>
<div class="t " style="left:2234.23px;top:792.13px;font-size:24.71px;color:#fff;">AMT</div>
<div class="t " style="left:2366.63px;top:792.13px;font-size:24.71px;color:#fff;">AC</div>
<div class="r" style="left:2433.40px;top:787.00px;width:237.50px;height:37.70px;background:#4277e6;"></div>
<div class="r" style="left:2671.90px;top:787.00px;width:149.50px;height:37.70px;background:#4277e6;"></div>
<div class="r" style="left:2822.40px;top:787.00px;width:31.00px;height:37.70px;background:#4277e6;overflow:hidden;"><div class="t" style="left:-1px;top:5.2px;font-size:24.7px;color:#fff;">AC</div></div>
<div class="t " style="left:2522.87px;top:792.13px;font-size:24.71px;color:#fff;">Code</div>
<div class="t " style="left:2720.33px;top:792.13px;font-size:24.71px;color:#fff;">AMT</div>
<div class="r" style="left:2858.50px;top:787.00px;width:237.50px;height:37.70px;background:#4277e6;"></div>
<div class="r" style="left:3097.00px;top:787.00px;width:149.50px;height:37.70px;background:#4277e6;"></div>
<div class="r" style="left:3247.50px;top:787.00px;width:31.00px;height:37.70px;background:#4277e6;overflow:hidden;"><div class="t" style="left:-1px;top:5.2px;font-size:24.7px;color:#fff;">AC</div></div>
<div class="t " style="left:2947.97px;top:792.13px;font-size:24.71px;color:#fff;">Code</div>
<div class="t " style="left:3145.43px;top:792.13px;font-size:24.71px;color:#fff;">AMT</div>
<svg class="r" style="left:1493.50px;top:742.00px;" width="27.50" height="35.00" viewBox="0 0 27.5 35" preserveAspectRatio="none"><g fill="none" stroke="#2e8a2e" stroke-width="2.4" stroke-linejoin="round"><path d="M2 2 L18 2 L26 10 L26 33 L2 33 Z"/><path d="M18 2 L18 10 L26 10"/></g><text x="14" y="30" font-family="Liberation Sans" font-size="23" fill="#2e8a2e" text-anchor="middle">x</text></svg>
<div class="r" style="left:1528.70px;top:775.60px;width:8.60px;height:2.40px;background:#3a72e0;"></div>
<svg class="r" style="left:1542.50px;top:743.50px;" width="33.00" height="33.00" viewBox="0 0 33.0 33.0" preserveAspectRatio="none"><g fill="none" stroke="#ee6a4d" stroke-width="2.6" stroke-linejoin="round"><path d="M15 6 L2 6 L2 31 L26 31 L26 19"/><path d="M12 22 L13 16 L28 2 Q31 1 32 4 L18 19 Z"/></g></svg>
<svg class="r" style="left:2818.00px;top:743.50px;" width="33.00" height="33.00" viewBox="0 0 33 33.0" preserveAspectRatio="none"><g fill="none" stroke="#ee6a4d" stroke-width="2.6" stroke-linejoin="round"><path d="M15 6 L2 6 L2 31 L26 31 L26 19"/><path d="M12 22 L13 16 L28 2 Q31 1 32 4 L18 19 Z"/></g></svg>
<svg class="r" style="left:3243.00px;top:743.50px;" width="33.00" height="33.00" viewBox="0 0 33 33.0" preserveAspectRatio="none"><g fill="none" stroke="#ee6a4d" stroke-width="2.6" stroke-linejoin="round"><path d="M15 6 L2 6 L2 31 L26 31 L26 19"/><path d="M12 22 L13 16 L28 2 Q31 1 32 4 L18 19 Z"/></g></svg>
<div class="r" style="left:1157.80px;top:825.00px;width:419.80px;height:48.50px;background:#e9ecef;"></div>
<div class="r" style="left:1157.80px;top:873.50px;width:419.80px;height:1.00px;background:#dde2e7;"></div>
<div class="r" style="left:1157.80px;top:874.50px;width:419.80px;height:46.50px;background:#f2f4f7;"></div>
<div class="r" style="left:1157.80px;top:921.00px;width:419.80px;height:1.00px;background:#dde2e7;"></div>
<div class="r" style="left:1582.20px;top:825.00px;width:422.80px;height:48.50px;background:#e9ecef;"></div>
<div class="r" style="left:1582.20px;top:873.50px;width:422.80px;height:1.00px;background:#dde2e7;"></div>
<div class="r" style="left:1582.20px;top:874.50px;width:422.80px;height:46.50px;background:#f2f4f7;"></div>
<div class="r" style="left:1582.20px;top:921.00px;width:422.80px;height:1.00px;background:#dde2e7;"></div>
<div class="r" style="left:2433.00px;top:825.00px;width:422.00px;height:48.50px;background:#e9ecef;"></div>
<div class="r" style="left:2858.00px;top:825.00px;width:422.00px;height:48.50px;background:#e9ecef;"></div>
<div class="r" style="left:1158.70px;top:833.30px;width:236.50px;height:35.10px;background:#fff;border:1.3px solid #8b8b8b;border-radius:9px;overflow:hidden;"></div>
<div class="r" style="left:1159.7px;top:833.3px;width:204.0px;height:35.10000000000002px;overflow:hidden;">
<div class="t " style="left:7.20px;top:5.47px;font-size:22.67px;color:#111;letter-spacing:0.013px;">REG - Regular Hou</div>
</div>
<svg class="r" style="left:1371.20px;top:847.30px;" width="17.50" height="10.00" viewBox="0 0 17.5 10.0" preserveAspectRatio="none"><path d="M1.5 1.5 L8.75 8.5 L16 1.5" fill="none" stroke="#111" stroke-width="2.2"/></svg>
<div class="r" style="left:1396.40px;top:830.70px;width:149.30px;height:39.70px;background:#fff;border:1.3px solid #8b8b8b;border-radius:10px;"></div>
<div class="t " style="left:1400.70px;top:838.77px;font-size:22.67px;color:#111;">40</div>
<svg class="r" style="left:1553.40px;top:837.80px;" width="20.00" height="24.00" viewBox="0 0 20.0 24.0" preserveAspectRatio="none"><g fill="none" stroke="#e5322c" stroke-width="2.2"><path d="M1 5 L19 5"/><path d="M7 5 L7 1.5 L13 1.5 L13 5"/><path d="M3 5 L4 23 L16 23 L17 5"/><path d="M7.5 9 L7.5 19 M10 9 L10 19 M12.5 9 L12.5 19"/></g></svg>
<div class="r" style="left:1158.70px;top:881.30px;width:236.50px;height:35.10px;background:#fff;border:1.3px solid #8b8b8b;border-radius:9px;overflow:hidden;"></div>
<div class="r" style="left:1159.7px;top:881.3px;width:204.0px;height:35.10000000000002px;overflow:hidden;">
<div class="t " style="left:7.20px;top:5.47px;font-size:22.67px;color:#111;">OT - Overtime Hours</div>
</div>
<svg class="r" style="left:1371.20px;top:895.30px;" width="17.50" height="10.00" viewBox="0 0 17.5 10.0" preserveAspectRatio="none"><path d="M1.5 1.5 L8.75 8.5 L16 1.5" fill="none" stroke="#111" stroke-width="2.2"/></svg>
<div class="r" style="left:1396.40px;top:878.70px;width:149.30px;height:39.60px;background:#fff;border:1.3px solid #8b8b8b;border-radius:10px;"></div>
<div class="t " style="left:1400.70px;top:886.77px;font-size:22.67px;color:#111;">2</div>
<svg class="r" style="left:1553.40px;top:885.80px;" width="20.00" height="24.00" viewBox="0 0 20.0 24.0" preserveAspectRatio="none"><g fill="none" stroke="#e5322c" stroke-width="2.2"><path d="M1 5 L19 5"/><path d="M7 5 L7 1.5 L13 1.5 L13 5"/><path d="M3 5 L4 23 L16 23 L17 5"/><path d="M7.5 9 L7.5 19 M10 9 L10 19 M12.5 9 L12.5 19"/></g></svg>
<div class="r" style="left:1583.40px;top:833.30px;width:236.50px;height:35.10px;background:#fff;border:1.3px solid #8b8b8b;border-radius:9px;overflow:hidden;"></div>
<div class="r" style="left:1584.4px;top:833.3px;width:204.0px;height:35.10000000000002px;overflow:hidden;">
<div class="t " style="left:7.20px;top:5.47px;font-size:22.67px;color:#111;letter-spacing:-0.020px;">ELEC - Electricity A</div>
</div>
<svg class="r" style="left:1795.90px;top:847.30px;" width="17.50" height="10.00" viewBox="0 0 17.5 10.0" preserveAspectRatio="none"><path d="M1.5 1.5 L8.75 8.5 L16 1.5" fill="none" stroke="#111" stroke-width="2.2"/></svg>
<div class="r" style="left:1821.10px;top:830.70px;width:149.30px;height:39.70px;background:#fff;border:1.3px solid #8b8b8b;border-radius:10px;"></div>
<div class="t " style="left:1825.40px;top:838.77px;font-size:22.67px;color:#111;">100</div>
<svg class="r" style="left:1978.10px;top:837.80px;" width="20.00" height="24.00" viewBox="0 0 20.0 24.0" preserveAspectRatio="none"><g fill="none" stroke="#e5322c" stroke-width="2.2"><path d="M1 5 L19 5"/><path d="M7 5 L7 1.5 L13 1.5 L13 5"/><path d="M3 5 L4 23 L16 23 L17 5"/><path d="M7.5 9 L7.5 19 M10 9 L10 19 M12.5 9 L12.5 19"/></g></svg>
<div class="r" style="left:1583.40px;top:881.30px;width:236.50px;height:35.10px;background:#fff;border:1.3px solid #8b8b8b;border-radius:9px;overflow:hidden;"></div>
<div class="r" style="left:1584.4px;top:881.3px;width:204.0px;height:35.10000000000002px;overflow:hidden;">
<div class="t " style="left:7.20px;top:5.47px;font-size:22.67px;color:#111;">GASHW - Gas - Hot Water</div>
</div>
<svg class="r" style="left:1795.90px;top:895.30px;" width="17.50" height="10.00" viewBox="0 0 17.5 10.0" preserveAspectRatio="none"><path d="M1.5 1.5 L8.75 8.5 L16 1.5" fill="none" stroke="#111" stroke-width="2.2"/></svg>
<div class="r" style="left:1821.10px;top:878.70px;width:149.30px;height:39.60px;background:#fff;border:1.3px solid #8b8b8b;border-radius:10px;"></div>
<div class="t " style="left:1825.40px;top:886.77px;font-size:22.67px;color:#111;">10</div>
<svg class="r" style="left:1978.10px;top:885.80px;" width="20.00" height="24.00" viewBox="0 0 20.0 24.0" preserveAspectRatio="none"><g fill="none" stroke="#e5322c" stroke-width="2.2"><path d="M1 5 L19 5"/><path d="M7 5 L7 1.5 L13 1.5 L13 5"/><path d="M3 5 L4 23 L16 23 L17 5"/><path d="M7.5 9 L7.5 19 M10 9 L10 19 M12.5 9 L12.5 19"/></g></svg>
<div class="r" style="left:2434.40px;top:833.30px;width:236.50px;height:35.10px;background:#fff;border:1.3px solid #8b8b8b;border-radius:9px;overflow:hidden;"></div>
<div class="r" style="left:2435.4px;top:833.3px;width:204.0px;height:35.10000000000002px;overflow:hidden;">
<div class="t " style="left:7.20px;top:5.47px;font-size:22.67px;color:#111;transform-origin:0 0;transform:scaleX(0.935);">TRAV - TRAVEL ALLOWANCE</div>
</div>
<svg class="r" style="left:2646.90px;top:847.30px;" width="17.50" height="10.00" viewBox="0 0 17.5 10.0" preserveAspectRatio="none"><path d="M1.5 1.5 L8.75 8.5 L16 1.5" fill="none" stroke="#111" stroke-width="2.2"/></svg>
<div class="r" style="left:2672.10px;top:830.70px;width:149.30px;height:39.70px;background:#fff;border:1.3px solid #8b8b8b;border-radius:10px;"></div>
<div class="t " style="left:2676.40px;top:838.77px;font-size:22.67px;color:#111;">100</div>
<svg class="r" style="left:2829.10px;top:837.80px;" width="20.00" height="24.00" viewBox="0 0 20.0 24.0" preserveAspectRatio="none"><g fill="none" stroke="#e5322c" stroke-width="2.2"><path d="M1 5 L19 5"/><path d="M7 5 L7 1.5 L13 1.5 L13 5"/><path d="M3 5 L4 23 L16 23 L17 5"/><path d="M7.5 9 L7.5 19 M10 9 L10 19 M12.5 9 L12.5 19"/></g></svg>
<div class="r" style="left:2859.50px;top:833.30px;width:236.50px;height:35.10px;background:#fff;border:1.3px solid #8b8b8b;border-radius:9px;overflow:hidden;"></div>
<div class="r" style="left:2860.5px;top:833.3px;width:204.0px;height:35.10000000000002px;overflow:hidden;">
<div class="t " style="left:7.20px;top:5.47px;font-size:22.67px;color:#111;letter-spacing:0.233px;">PADVD1 - General</div>
</div>
<svg class="r" style="left:3072.00px;top:847.30px;" width="17.50" height="10.00" viewBox="0 0 17.5 10.0" preserveAspectRatio="none"><path d="M1.5 1.5 L8.75 8.5 L16 1.5" fill="none" stroke="#111" stroke-width="2.2"/></svg>
<div class="r" style="left:3097.20px;top:830.70px;width:149.30px;height:39.70px;background:#fff;border:1.3px solid #8b8b8b;border-radius:10px;"></div>
<div class="t " style="left:3101.50px;top:838.77px;font-size:22.67px;color:#111;">1088.1</div>
<svg class="r" style="left:3254.20px;top:837.80px;" width="20.00" height="24.00" viewBox="0 0 20.0 24.0" preserveAspectRatio="none"><g fill="none" stroke="#e5322c" stroke-width="2.2"><path d="M1 5 L19 5"/><path d="M7 5 L7 1.5 L13 1.5 L13 5"/><path d="M3 5 L4 23 L16 23 L17 5"/><path d="M7.5 9 L7.5 19 M10 9 L10 19 M12.5 9 L12.5 19"/></g></svg>
<div class="r" style="left:1156.50px;top:921.60px;width:423.70px;height:51.50px;background:#f0f2f5;border:3.5px solid #0b1ee6;box-shadow:0 8px 9px -3px rgba(30,50,240,.55);"></div>
<div class="r" style="left:2432.40px;top:873.00px;width:423.10px;height:51.80px;background:#f0f2f5;border:3.5px solid #0b1ee6;box-shadow:0 8px 9px -3px rgba(30,50,240,.55);"></div>
<div class="r" style="left:2857.40px;top:873.30px;width:423.60px;height:51.50px;background:#f0f2f5;border:3.5px solid #0b1ee6;box-shadow:0 8px 9px -3px rgba(30,50,240,.55);"></div>
<div class="r" style="left:1158.70px;top:931.30px;width:236.50px;height:35.30px;background:#fff;border:1.3px solid #8b8b8b;border-radius:9px;overflow:hidden;"></div>
<div class="r" style="left:1159.7px;top:931.3px;width:204.0px;height:35.30000000000007px;overflow:hidden;">
<div class="t " style="left:7.20px;top:5.47px;font-size:22.67px;color:#111;">Select Hours Type</div>
</div>
<svg class="r" style="left:1371.20px;top:945.30px;" width="17.50" height="10.00" viewBox="0 0 17.5 10.0" preserveAspectRatio="none"><path d="M1.5 1.5 L8.75 8.5 L16 1.5" fill="none" stroke="#111" stroke-width="2.2"/></svg>
<div class="r" style="left:1396.40px;top:932.80px;width:149.30px;height:33.00px;background:#fff;border:1.3px solid #8b8b8b;border-radius:10px;"></div>
<svg class="r" style="left:1553.40px;top:935.80px;" width="20.00" height="24.00" viewBox="0 0 20.0 24.0" preserveAspectRatio="none"><g fill="none" stroke="#3a72e0" stroke-width="2.2"><path d="M1 5 L19 5"/><path d="M7 5 L7 1.5 L13 1.5 L13 5"/><path d="M3 5 L4 23 L16 23 L17 5"/><path d="M7.5 9 L7.5 19 M10 9 L10 19 M12.5 9 L12.5 19"/></g></svg>
<div class="r" style="left:2434.40px;top:883.00px;width:236.50px;height:35.00px;background:#fff;border:1.3px solid #8b8b8b;border-radius:9px;overflow:hidden;"></div>
<div class="r" style="left:2435.4px;top:883px;width:204.0px;height:35px;overflow:hidden;">
<div class="t " style="left:7.20px;top:5.47px;font-size:22.67px;color:#111;">Select Allowance Type</div>
</div>
<svg class="r" style="left:2646.90px;top:897.00px;" width="17.50" height="10.00" viewBox="0 0 17.5 10" preserveAspectRatio="none"><path d="M1.5 1.5 L8.75 8.5 L16 1.5" fill="none" stroke="#111" stroke-width="2.2"/></svg>
<div class="r" style="left:2672.10px;top:880.00px;width:149.30px;height:41.00px;background:#fff;border:1.3px solid #8b8b8b;border-radius:10px;"></div>
<svg class="r" style="left:2829.10px;top:887.50px;" width="20.00" height="24.00" viewBox="0 0 20.0 24.0" preserveAspectRatio="none"><g fill="none" stroke="#3a72e0" stroke-width="2.2"><path d="M1 5 L19 5"/><path d="M7 5 L7 1.5 L13 1.5 L13 5"/><path d="M3 5 L4 23 L16 23 L17 5"/><path d="M7.5 9 L7.5 19 M10 9 L10 19 M12.5 9 L12.5 19"/></g></svg>
<div class="r" style="left:2859.50px;top:883.00px;width:236.50px;height:35.00px;background:#fff;border:1.3px solid #8b8b8b;border-radius:9px;overflow:hidden;"></div>
<div class="r" style="left:2860.5px;top:883px;width:204.0px;height:35px;overflow:hidden;">
<div class="t " style="left:7.20px;top:5.47px;font-size:22.67px;color:#111;">Select Deduction Type</div>
</div>
<svg class="r" style="left:3072.00px;top:897.00px;" width="17.50" height="10.00" viewBox="0 0 17.5 10" preserveAspectRatio="none"><path d="M1.5 1.5 L8.75 8.5 L16 1.5" fill="none" stroke="#111" stroke-width="2.2"/></svg>
<div class="r" style="left:3097.20px;top:880.00px;width:149.30px;height:41.00px;background:#fff;border:1.3px solid #8b8b8b;border-radius:10px;"></div>
<svg class="r" style="left:3254.20px;top:887.50px;" width="20.00" height="24.00" viewBox="0 0 20.0 24.0" preserveAspectRatio="none"><g fill="none" stroke="#3a72e0" stroke-width="2.2"><path d="M1 5 L19 5"/><path d="M7 5 L7 1.5 L13 1.5 L13 5"/><path d="M3 5 L4 23 L16 23 L17 5"/><path d="M7.5 9 L7.5 19 M10 9 L10 19 M12.5 9 L12.5 19"/></g></svg>
<div class="r" style="left:1152.00px;top:787.80px;width:383.20px;height:38.20px;border:7.5px solid #e8302a;"></div>
<div class="r" style="left:1154.70px;top:877.50px;width:394.30px;height:50.10px;border:7.8px solid #e8302a;"></div>
<div class="r" style="left:2432.40px;top:784.30px;width:384.00px;height:41.10px;border:7px solid #e8302a;"></div>
<div class="r" style="left:2432.40px;top:825.40px;width:389.00px;height:42.40px;border:7px solid #e8302a;"></div>
<div class="r" style="left:1169.40px;top:1614.00px;width:125.20px;height:46.20px;background:#fff;border:1.3px solid #3d6fd9;border-radius:9px;"></div>
<div class="t " style="left:1190.00px;top:1624.88px;font-size:23.55px;color:#111;transform-origin:0 0;transform:scaleX(0.9034);">Save</div>
<svg class="r" style="left:1249.50px;top:1630.00px;" width="16.50" height="17.00" viewBox="0 0 16.5 17" preserveAspectRatio="none"><g fill="none" stroke="#111" stroke-width="2"><path d="M1 1 L12 1 L15.5 4.5 L15.5 16 L1 16 Z"/><rect x="4" y="1" width="7" height="5"/><rect x="4" y="9" width="8.5" height="7"/></g></svg>
<div class="r" style="left:1309.30px;top:1614.00px;width:151.20px;height:46.20px;background:#fff;border:1.3px solid #3d6fd9;border-radius:9px;"></div>
<div class="t " style="left:1330.00px;top:1624.88px;font-size:23.55px;color:#e0382c;letter-spacing:-0.228px;">Locked</div>
<svg class="r" style="left:1415.50px;top:1628.00px;" width="16.00" height="20.00" viewBox="0 0 16.0 20" preserveAspectRatio="none"><g fill="none" stroke="#e0382c" stroke-width="2"><rect x="1" y="8" width="14" height="11"/><path d="M3.5 8 L3.5 5 Q3.5 1 8 1 Q12.5 1 12.5 5 L12.5 8"/></g></svg>
<div class="r" style="left:1475.60px;top:1614.00px;width:362.20px;height:46.20px;background:#68c64e;border:1.3px solid #3d6fd9;border-radius:9px;"></div>
<div class="t " style="left:1496.60px;top:1624.88px;font-size:23.55px;color:#fff;letter-spacing:-0.156px;">Amalgamate (Employee)</div>
<svg class="r" style="left:1761.00px;top:1630.00px;" width="20.00" height="17.00" viewBox="0 0 20 17" preserveAspectRatio="none"><g fill="none" stroke="#fff" stroke-width="2"><path d="M2 16 L2 4 L15 4"/><path d="M11 1 L15 4 L11 7"/><path d="M18 1 L18 13 L6 13"/><path d="M14 10 L18 13 L14 16"/></g></svg>
<svg class="r" style="left:1792.00px;top:1628.00px;" width="18.00" height="20.00" viewBox="0 0 18 20" preserveAspectRatio="none"><g fill="none" stroke="#fff" stroke-width="2"><circle cx="9" cy="6" r="4.5"/><path d="M1 19 Q2 11 9 11 Q16 11 17 19"/></g></svg>
<div class="r" style="left:1852.40px;top:1614.00px;width:275.40px;height:46.20px;background:#68c64e;border:1.3px solid #3d6fd9;border-radius:9px;"></div>
<div class="t " style="left:1873.40px;top:1624.88px;font-size:23.55px;color:#fff;letter-spacing:-0.109px;">Test (Employee)</div>
<svg class="r" style="left:2054.50px;top:1630.00px;" width="13.50" height="17.00" viewBox="0 0 13.5 17" preserveAspectRatio="none"><g fill="none" stroke="#fff" stroke-width="2"><path d="M1.5 1.5 L10 8.5 L1.5 15.5 Z"/><path d="M12 1 L12 16"/></g></svg>
<svg class="r" style="left:2083.00px;top:1628.00px;" width="15.00" height="20.00" viewBox="0 0 15 20" preserveAspectRatio="none"><g fill="none" stroke="#fff" stroke-width="2"><circle cx="7.5" cy="6" r="4.5"/><path d="M1 19 Q1.5 11 7.5 11 Q13.5 11 14 19"/></g></svg>
<div class="r" style="left:2138.80px;top:1609.00px;width:205.40px;height:54.50px;background:#e8302a;"></div>
<div class="r" style="left:2146.50px;top:1616.80px;width:191.00px;height:39.10px;background:#68c64e;"></div>
<div class="t " style="left:2164.00px;top:1624.88px;font-size:23.55px;color:#fff;letter-spacing:-0.100px;">Test (All)</div>
<svg class="r" style="left:2267.00px;top:1630.00px;" width="14.00" height="17.00" viewBox="0 0 14 17" preserveAspectRatio="none"><path d="M1.5 1.5 L12.5 8.5 L1.5 15.5 Z" fill="none" stroke="#fff" stroke-width="2"/></svg>
<svg class="r" style="left:2293.00px;top:1630.00px;" width="21.00" height="17.00" viewBox="0 0 21 17" preserveAspectRatio="none"><g fill="none" stroke="#fff" stroke-width="1.6"><circle cx="6" cy="3.5" r="2.5"/><circle cx="15" cy="3.5" r="2.5"/><circle cx="10.5" cy="9" r="2.5"/><path d="M1 11 Q1 7 6 7 M20 11 Q20 7 15 7 M5 16 Q5 12 10.5 12 Q16 12 16 16"/></g></svg>
<div class="r" style="left:2355.90px;top:1614.00px;width:191.90px;height:46.20px;background:#d3402a;border:1.3px solid #f0a030;border-radius:9px;"></div>
<div class="t " style="left:2376.00px;top:1624.88px;font-size:23.55px;color:#fff;">View Errors(0)</div>
<div class="r" style="left:3132.00px;top:1624.00px;width:180.60px;height:97.80px;background:linear-gradient(35deg,#1c4a98 0%,#2563c4 50%,#2f7de8 100%);border-radius:49px;"></div>
<svg class="r" style="left:3160.00px;top:1652.80px;" width="40.00" height="40.20" viewBox="0 0 40 40.2" preserveAspectRatio="none"><g fill="none" stroke="#fff" stroke-width="3.2" stroke-linejoin="round"><circle cx="20" cy="20" r="16.5"/><path d="M12.5 2.5 L23.8 38.9 L31.3 37.3 L20 1 Z"/><path d="M0.75 22.4 L37.6 12.4 L38.9 19.9 L2.5 29.9 Z"/></g></svg>
<div class="t " style="left:3222.40px;top:1656.43px;font-size:29.80px;color:#fff;font-weight:700;transform-origin:0 0;transform:scaleX(0.9611);">Help</div>
</body></html>
